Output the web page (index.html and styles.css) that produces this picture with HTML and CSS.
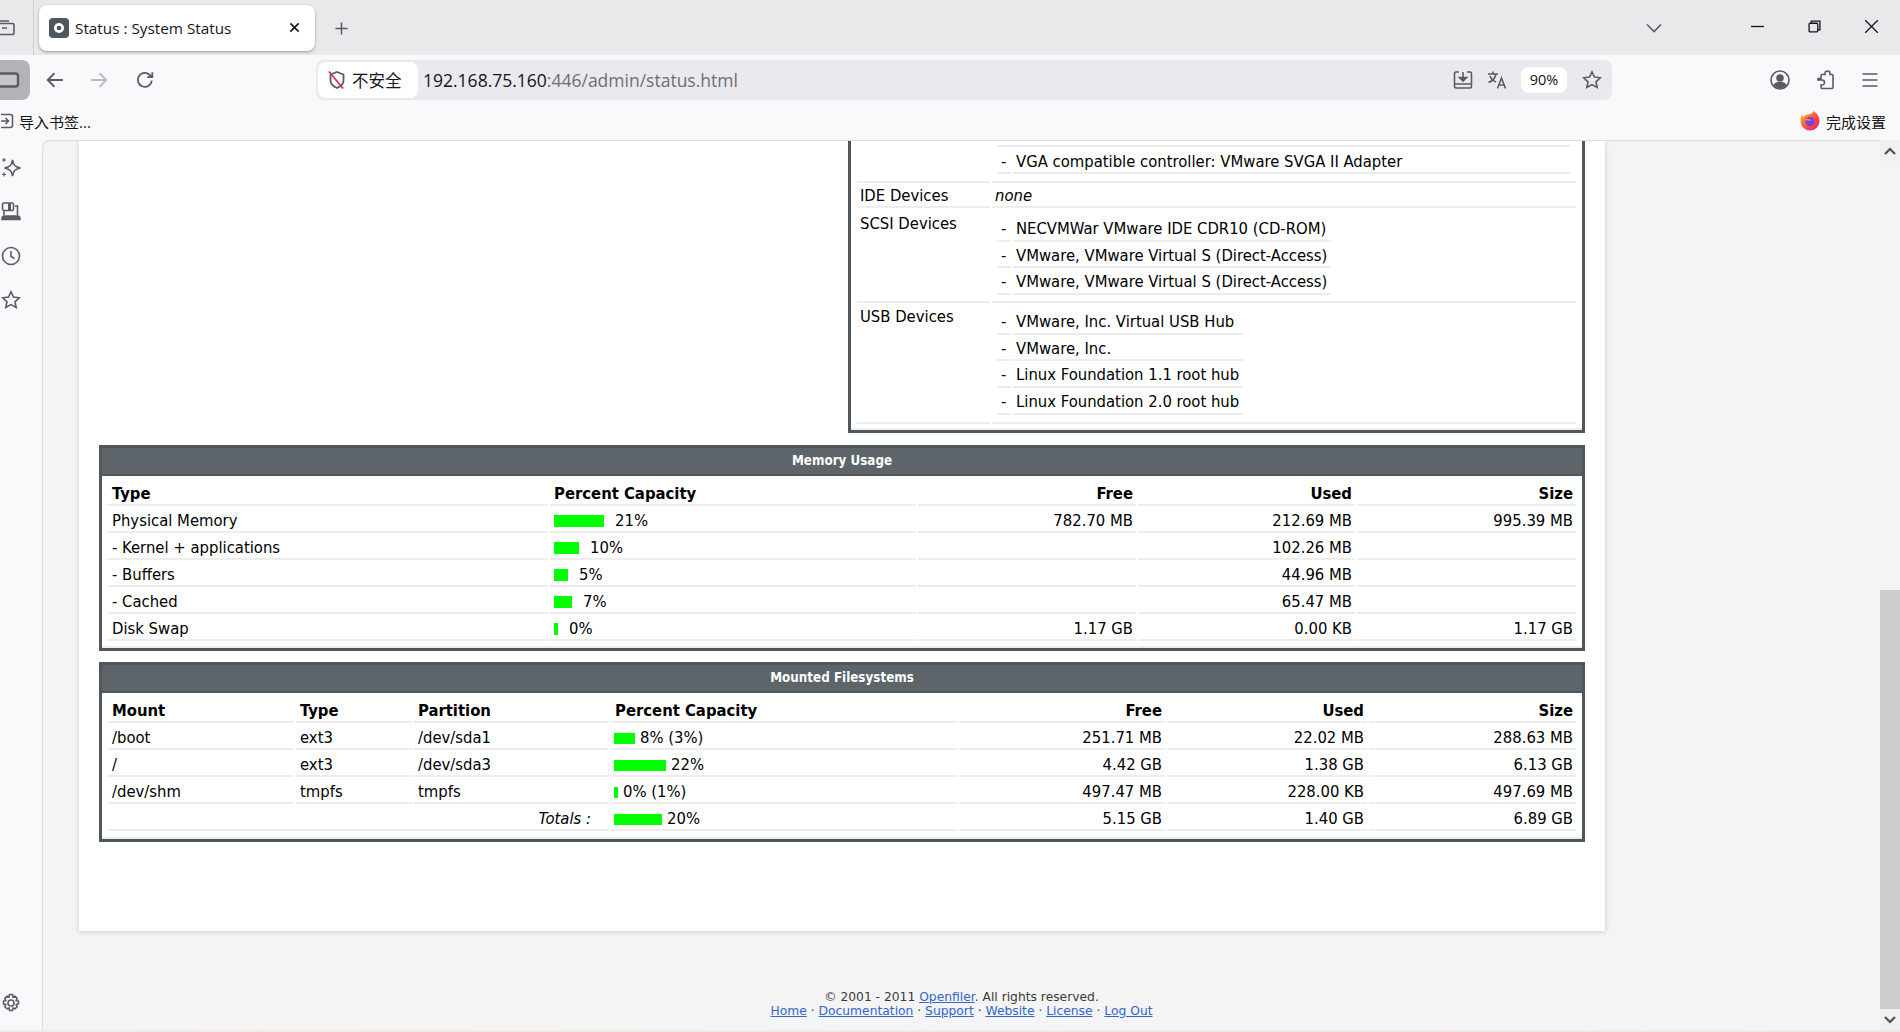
FILE: index.html
```html
<!DOCTYPE html>
<html lang="en">
<head>
<meta charset="utf-8">
<title>Status : System Status</title>
<link rel="stylesheet" href="styles.css">
</head>
<body>
<div class="window">
  <header class="tabstrip">
    <div class="tabs-left">
      <svg class="ic tabs-ic" viewBox="0 0 16 16"><path d="M-3 3.500h15.500a1.500 1.500 0 0 1 1.500 1.500v8a1.500 1.500 0 0 1-1.500 1.500H-3M-3 1h12M2 8h5"/></svg>
      <div class="divider"></div>
      <div class="tab">
        <svg class="favicon" viewBox="0 0 20 20"><rect width="20" height="20" rx="4" fill="#4f575c"/><circle cx="10" cy="10" r="5" fill="#fff"/><circle cx="10" cy="10" r="2.300" fill="#4f575c"/></svg>
        <span class="tab-title">Status : System Status</span>
        <svg class="ic tab-close" viewBox="0 0 12 12"><path d="M1.500 1.500l9 9M10.500 1.500l-9 9"/></svg>
      </div>
      <svg class="ic new-tab" viewBox="0 0 16 16"><path d="M8 1.500v13M1.500 8h13"/></svg>
    </div>
    <div class="win-ctrls">
      <svg class="ic tab-list" viewBox="0 0 16 10"><path d="M1 1.500l7 7 7-7"/></svg>
      <svg class="ic win-ic win-min" viewBox="0 0 12 12"><path d="M0 6h12"/></svg>
      <svg class="ic win-ic win-max" viewBox="0 0 12 12"><path d="M3 3V1h8v8H9"/><rect x="1" y="3" width="8" height="8" rx="1"/></svg>
      <svg class="ic win-ic win-close" viewBox="0 0 12 12"><path d="M0 0l12 12M12 0L0 12"/></svg>
    </div>
  </header>

  <nav class="toolbar">
    <div class="nav-left">
      <div class="sidebar-btn"><svg class="ic" viewBox="0 0 20 16"><rect x="-6" y="1.500" width="24" height="13" rx="2.500" fill="#c6c6ca"/></svg></div>
      <svg class="ic nav-ic" viewBox="0 0 16 16"><path d="M15 8H1.500M7.500 2l-6 6 6 6"/></svg>
      <svg class="ic nav-ic dim" viewBox="0 0 16 16"><path d="M1 8h13.500M8.500 2l6 6-6 6"/></svg>
      <svg class="ic nav-ic" viewBox="0 0 16 16"><path d="M14 8.500a6.200 6.200 0 1 1-2-5.200L14 5M14.500 1v4.500H10"/></svg>
    </div>
    <div class="urlbar">
      <div class="site-badge">
        <svg class="shield" viewBox="0 0 20 20"><path d="M10 2l6.500 2.500v6c0 3.500-3 6-6.500 7.500-3.500-1.500-6.500-4-6.500-7.500v-6z" fill="none" stroke="#5b5b66" stroke-width="1.800"/><path d="M2 1.500l14 17" stroke="#e22850" stroke-width="1.800"/></svg>
        <span>不安全</span>
      </div>
      <div class="url"><span class="url-host">192.168.75.160</span><span class="url-rest">:446/admin/status.html</span></div>
      <div class="url-actions">
        <svg class="ic act" viewBox="0 0 20 20"><path d="M6 2H3a1.500 1.500 0 0 0-1.500 1.500v13A1.500 1.500 0 0 0 3 18h14a1.500 1.500 0 0 0 1.500-1.500v-13A1.500 1.500 0 0 0 17 2h-3M1.500 14h17M10 2v8.500"/><path d="M6.500 7.500L10 11l3.500-3.500z" fill="#5b5b66"/></svg>
        <svg class="ic act act-tr" viewBox="0 0 20 20"><path d="M1 4h10M6 1.500V4M9 4c-.8 4-3.500 7-7.500 8.500M3 6c1 3 3.500 5 6 6M10.500 18.500L14.500 8l4 10.500M12 15h5"/></svg>
        <span class="zoom-pill">90%</span>
        <svg class="ic act" viewBox="0 0 20 20"><path d="M10 1.800l2.500 5.300 5.800.7-4.300 4 1.200 5.700-5.200-2.900-5.200 2.900L6 11.800l-4.300-4 5.800-.7z"/></svg>
      </div>
    </div>
    <div class="nav-right">
      <svg class="ic act" viewBox="0 0 20 20"><circle cx="10" cy="10" r="9"/><circle cx="10" cy="8" r="3" fill="#5b5b66"/><path d="M3.500 15c1-2.500 3.500-3 6.500-3s5.500.5 6.500 3c-1.500 2-4 3.500-6.500 3.500s-5-1.500-6.500-3.500z" fill="#5b5b66" stroke="none"/></svg>
      <svg class="ic act" viewBox="0 0 20 20"><path d="M2 9h3V6a1 1 0 0 1 1-1h3V4a2.500 2.500 0 0 1 5 0v1h2a1 1 0 0 1 1 1v12a1 1 0 0 1-1 1H6a1 1 0 0 1-1-1v-2.500h1a2.500 2.500 0 0 0 0-5H2z" transform="translate(0 -0.500)"/></svg>
      <svg class="ic act" viewBox="0 0 20 20"><path d="M2.500 4h15M2.500 10h15M2.500 16h15"/></svg>
    </div>
  </nav>

  <div class="bookmarks">
    <div class="bm-item">
      <svg class="ic bm-ic" viewBox="0 0 14 16"><path d="M1 1.500h9.500a2 2 0 0 1 2 2v9a2 2 0 0 1-2 2H1M1 8h7M5.500 5L8.500 8l-3 3"/></svg>
      <span>导入书签...</span>
    </div>
    <div class="bm-item">
      <svg class="fx" viewBox="0 0 20 20"><defs><linearGradient id="fxg" x1="0" y1="0" x2="1" y2="1"><stop offset="0" stop-color="#ffbd2e"/><stop offset=".55" stop-color="#ff4f3a"/><stop offset="1" stop-color="#e31587"/></linearGradient></defs><path d="M13.500 0c3.500 2.500 6 5.500 6 10a9.500 9.500 0 0 1-19 0c0-2.500.6-4.500 1.500-6 .2 1 .7 1.800 1.500 2.200C4.500 4.500 6 3.400 8 3.400c2.500 0 5-1 5.500-3.400z" fill="url(#fxg)"/><circle cx="10" cy="10.500" r="4.500" fill="#7542e5"/><path d="M5.500 8.500c2 0 3 .5 5 .5" stroke="#ff980e" stroke-width="1.500" fill="none"/></svg>
      <span>完成设置</span>
    </div>
  </div>

  <div class="viewport">
    <aside class="sidebar">
      <div class="side-top">
        <svg class="ic side-ic" viewBox="0 0 20 20"><path d="M11.500 2c.8 5 2.500 7 8 8-5.500 1-7.200 3-8 8-.8-5-2.500-7-8-8 5.500-1 7.200-3 8-8z"/><path d="M3 0v4M1 2h4M3 14.500v4M1 16.500h4" stroke-width="1.200"/></svg>
        <svg class="ic side-ic" viewBox="0 0 20 20"><rect x="1.500" y="1" width="11" height="7.500" rx="1.500"/><path d="M8.500 1v7.500" stroke-width="3"/><path d="M14 4h2.500v9M3 9v4"/><path d="M1 17.500c0-2 .5-3.500 2-3.500h14c1.500 0 2 1.500 2 3.500z" fill="#5b5b66"/></svg>
        <svg class="ic side-ic" viewBox="0 0 20 20"><circle cx="10" cy="10" r="8.500"/><path d="M10 5v5.500l3.500 2"/></svg>
        <svg class="ic side-ic" viewBox="0 0 20 20"><path d="M10 1.800l2.500 5.300 5.800.7-4.300 4 1.200 5.700-5.200-2.900-5.200 2.900L6 11.800l-4.300-4 5.800-.7z"/></svg>
      </div>
      <svg class="ic side-ic" viewBox="0 0 20 20"><circle cx="10" cy="10" r="3"/><path d="M8.500 1.500h3l.5 2.500 2-.9 2.200 2.200-1 2.100 2.300.6v3l-2.300.6 1 2.100-2.200 2.200-2-.9-.5 2.500h-3l-.5-2.500-2 .9-2.200-2.200 1-2.100-2.300-.6v-3l2.300-.6-1-2.100L6 3.100l2 .9z"/></svg>
    </aside>

    <main class="page">
      <section class="card">
        <div class="hw-wrap">
          <div class="panel panel-hw">
            <table class="grid hw">
              <colgroup><col class="h1"><col class="h2"></colgroup>
              <tr>
                <td class="hw-label"></td>
                <td class="hw-value">
                  <div class="top-rule"></div>
                  <div class="sub full"><span class="dash">-</span><span class="sub-text">VGA compatible controller: VMware SVGA II Adapter</span></div>
                </td>
              </tr>
              <tr>
                <td class="mid">IDE Devices</td>
                <td class="mid"><em>none</em></td>
              </tr>
              <tr>
                <td class="hw-label scsi-label">SCSI Devices</td>
                <td class="hw-value">
                  <div class="subs scsi">
                    <div class="sub"><span class="dash">-</span><span class="sub-text">NECVMWar VMware IDE CDR10 (CD-ROM)</span></div>
                    <div class="sub"><span class="dash">-</span><span class="sub-text">VMware, VMware Virtual S (Direct-Access)</span></div>
                    <div class="sub"><span class="dash">-</span><span class="sub-text">VMware, VMware Virtual S (Direct-Access)</span></div>
                  </div>
                </td>
              </tr>
              <tr>
                <td class="hw-label usb-label">USB Devices</td>
                <td class="hw-value">
                  <div class="subs usb">
                    <div class="sub"><span class="dash">-</span><span class="sub-text">VMware, Inc. Virtual USB Hub</span></div>
                    <div class="sub"><span class="dash">-</span><span class="sub-text">VMware, Inc.</span></div>
                    <div class="sub"><span class="dash">-</span><span class="sub-text">Linux Foundation 1.1 root hub</span></div>
                    <div class="sub"><span class="dash">-</span><span class="sub-text">Linux Foundation 2.0 root hub</span></div>
                  </div>
                </td>
              </tr>
            </table>
          </div>
        </div>

        <div class="panel panel-mem">
          <div class="panel-title">Memory Usage</div>
          <table class="grid mem">
            <colgroup><col class="m1"><col class="m2"><col class="m3"><col class="m4"><col class="m5"></colgroup>
            <tr><th>Type</th><th>Percent Capacity</th><th class="r">Free</th><th class="r">Used</th><th class="r">Size</th></tr>
            <tr><td>Physical Memory</td><td><span class="bar" style="width:50px"></span><span class="pct wide">21%</span></td><td class="r">782.70 MB</td><td class="r">212.69 MB</td><td class="r">995.39 MB</td></tr>
            <tr><td>- Kernel + applications</td><td><span class="bar" style="width:25px"></span><span class="pct wide">10%</span></td><td class="r"></td><td class="r">102.26 MB</td><td class="r"></td></tr>
            <tr><td>- Buffers</td><td><span class="bar" style="width:14px"></span><span class="pct wide">5%</span></td><td class="r"></td><td class="r">44.96 MB</td><td class="r"></td></tr>
            <tr><td>- Cached</td><td><span class="bar" style="width:18px"></span><span class="pct wide">7%</span></td><td class="r"></td><td class="r">65.47 MB</td><td class="r"></td></tr>
            <tr><td>Disk Swap</td><td><span class="bar" style="width:4px"></span><span class="pct wide">0%</span></td><td class="r">1.17 GB</td><td class="r">0.00 KB</td><td class="r">1.17 GB</td></tr>
          </table>
        </div>

        <div class="panel panel-fs">
          <div class="panel-title">Mounted Filesystems</div>
          <table class="grid fs">
            <colgroup><col class="f1"><col class="f2"><col class="f3"><col class="f4"><col class="f5"><col class="f6"><col class="f7"></colgroup>
            <tr><th>Mount</th><th>Type</th><th>Partition</th><th>Percent Capacity</th><th class="r">Free</th><th class="r">Used</th><th class="r">Size</th></tr>
            <tr><td>/boot</td><td>ext3</td><td>/dev/sda1</td><td><span class="bar" style="width:21px"></span><span class="pct">8% (3%)</span></td><td class="r">251.71 MB</td><td class="r">22.02 MB</td><td class="r">288.63 MB</td></tr>
            <tr><td>/</td><td>ext3</td><td>/dev/sda3</td><td><span class="bar" style="width:52px"></span><span class="pct">22%</span></td><td class="r">4.42 GB</td><td class="r">1.38 GB</td><td class="r">6.13 GB</td></tr>
            <tr><td>/dev/shm</td><td>tmpfs</td><td>tmpfs</td><td><span class="bar" style="width:4px"></span><span class="pct">0% (1%)</span></td><td class="r">497.47 MB</td><td class="r">228.00 KB</td><td class="r">497.69 MB</td></tr>
            <tr><td colspan="3" class="r totals"><em>Totals :</em></td><td><span class="bar" style="width:48px"></span><span class="pct">20%</span></td><td class="r">5.15 GB</td><td class="r">1.40 GB</td><td class="r">6.89 GB</td></tr>
          </table>
        </div>
      </section>

      <footer class="foot">
        <div>© 2001 - 2011 <a href="#">Openfiler</a>. All rights reserved.</div>
        <div><a href="#">Home</a> · <a href="#">Documentation</a> · <a href="#">Support</a> · <a href="#">Website</a> · <a href="#">License</a> · <a href="#">Log Out</a></div>
      </footer>
    </main>

    <div class="scrollbar">
      <div class="sb-btn"><svg viewBox="0 0 12 8"><path d="M1 7l5-5 5 5" fill="none" stroke="#505050" stroke-width="2.200"/></svg></div>
      <div class="sb-track"><div class="sb-thumb"></div></div>
      <div class="sb-btn"><svg viewBox="0 0 12 8"><path d="M1 1l5 5 5-5" fill="none" stroke="#505050" stroke-width="2.200"/></svg></div>
    </div>
  </div>
  <div class="bottom-strip"></div>
</div>
</body>
</html>
```
FILE: styles.css
```css
* { box-sizing: border-box; }
html, body { margin: 0; height: 100%; overflow: hidden; }
body { font-family: "Open Sans", "Noto Sans CJK SC", sans-serif; color: #15141a; background: #f9f9fb; }
.window { width: 1900px; height: 1032px; display: flex; flex-direction: column; overflow: hidden; }
.ic { fill: none; stroke: #5b5b66; stroke-width: 1.6; flex: none; overflow: hidden; }

.tabstrip { height: 55px; background: #e9e9ec; display: flex; justify-content: space-between; align-items: flex-start; }
.tabs-left { display: flex; align-items: flex-start; }
.tabs-ic { width: 16px; height: 16px; margin-top: 20px; }
.divider { width: 1px; height: 55px; background: #cfcfd4; margin-left: 17px; }
.tab { width: 276px; height: 46px; margin: 5px 0 0 5px; background: #fff; border-radius: 8px; box-shadow: 0 1px 3px rgba(0,0,0,.35); display: flex; align-items: center; padding: 0 15px 1px 10px; font-size: 15.300px; }
.favicon { width: 20px; height: 20px; flex: none; }
.tab-title { margin-left: 6px; flex: 1; }
.tab-close { width: 11px; height: 11px; stroke: #15141a; stroke-width: 1.700; }
.new-tab { width: 15px; height: 15px; margin: 21px 0 0 19px; }
.win-ctrls { display: flex; align-items: center; height: 53px; }
.tab-list { width: 16px; height: 10px; margin-right: 89px; margin-top: 2px; }
.win-ic { width: 13px; height: 13px; stroke: #15141a; stroke-width: 1.200; margin-right: 44px; }
.win-close { margin-right: 22px; }

.toolbar { height: 47px; display: flex; align-items: center; padding-top: 3px; padding-bottom: 1px; }
.nav-left { display: flex; align-items: center; width: 316px; flex: none; }
.sidebar-btn { width: 30px; height: 40px; background: #b4b4b8; border-radius: 0 8px 8px 0; display: flex; align-items: center; flex: none; }
.sidebar-btn .ic { width: 20px; height: 16px; stroke-width: 2.400; }
.nav-ic { width: 18px; height: 18px; margin-left: 16px; }
.nav-ic.dim { opacity: .4; margin-left: 26px; }
.nav-ic:last-child { margin-left: 28px; }
.urlbar { width: 1296px; height: 40px; background: #eaeaee; border-radius: 8px; display: flex; align-items: center; padding-left: 2px; flex: none; }
.site-badge { width: 100px; height: 36px; background: #fff; border-radius: 8px; display: flex; align-items: center; padding-left: 9px; gap: 5px; font-size: 16.500px; flex: none; }
.shield { width: 20px; height: 20px; flex: none; }
.url { margin-left: 5px; font-size: 17.500px; flex: 1; white-space: nowrap; }
.url-rest { color: #6e6e76; }
.url-actions { display: flex; align-items: center; padding-right: 10px; }
.act { width: 20px; height: 20px; }
.act-tr { margin-left: 14px; }
.zoom-pill { margin: 0 15px 0 14px; width: 46px; height: 26px; background: #fff; border-radius: 8px; font-size: 14.500px; display: flex; align-items: center; justify-content: center; }
.nav-right { display: flex; align-items: center; gap: 26px; margin-left: 158px; }
.nav-right .act:last-child { margin-left: -2px; }

.bookmarks { height: 38px; display: flex; justify-content: space-between; align-items: center; font-size: 15px; padding: 0 14px 0 0; }
.bm-item { display: flex; align-items: center; gap: 5px; }
.bm-ic { width: 14px; height: 16px; }
.fx { width: 20px; height: 20px; margin-right: 1px; }

.viewport { flex: 1; display: flex; min-height: 0; }
.sidebar { width: 42px; flex: none; display: flex; flex-direction: column; justify-content: space-between; padding: 18px 0 17px 1px; }
.side-top { display: flex; flex-direction: column; gap: 24px; }
.side-ic { width: 20px; height: 20px; display: block; }

.page { flex: 1; min-width: 0; background: #f4f4f4; border-top-left-radius: 8px; border-left: 1px solid #dcdcdc; border-top: 1px solid #dcdcdc; display: flex; flex-direction: column; overflow: hidden; }
.card { width: 1526px; height: 790px; margin-left: 36px; background: #fff; box-shadow: 0 1px 5px rgba(0,0,0,.18); padding: 0 20px; flex: none; font-family: "DejaVu Sans Condensed", "DejaVu Sans", sans-serif; font-size: 16.500px; color: #000; }
.hw-wrap { display: flex; justify-content: flex-end; }
.panel { border: 3px solid #4f575c; background: #fff; box-shadow: inset 0 -2px 0 #ededed; }
.panel-hw { width: 737px; height: 292px; border-top: 0; }
.panel-mem { margin-top: 12px; height: 206px; }
.panel-fs { margin-top: 11px; height: 180px; }
.panel-title { height: 28px; background: #5d646a; border-bottom: 2px solid #4f575c; color: #fff; text-align: center; font-size: 13.300px; font-weight: 700; line-height: 26px; }

.grid { border-collapse: separate; border-spacing: 2px; table-layout: fixed; width: 1472px; margin: 3px 4px 0; }
.grid td, .grid th { padding: 1px 3px 0 4px; height: 25px; border-bottom: 2px solid #ededed; text-align: left; white-space: nowrap; line-height: 21px; font-weight: 400; }
.grid th { font-weight: 700; padding-top: 2px; }
.grid .r { text-align: right; }

.m1 { width: 440px; } .m2 { width: 366px; } .m3 { width: 218px; } .m4 { width: 217px; } .m5 { width: 219px; }
.f1 { width: 186px; } .f2 { width: 116px; } .f3 { width: 195px; } .f4 { width: 346px; } .f5 { width: 206px; } .f6 { width: 200px; } .f7 { width: 207px; }

.bar { display: inline-block; height: 12px; background: #0f0; vertical-align: -1px; }
.fs .bar { height: 11px; margin-left: -1px; }
.pct { margin-left: 5px; }
.pct.wide { margin-left: 11px; }
.grid .totals { padding-right: 18px; }

.grid.hw { width: 723px; margin: 0 4px; }
.h1 { width: 133px; } .h2 { width: 584px; }
.grid .hw-label { vertical-align: top; padding: 0 3px; height: auto; }
.grid .scsi-label { padding-top: 3px; }
.grid .usb-label { padding-top: 1px; }
.grid .hw-value { vertical-align: top; padding: 0; height: auto; }
.top-rule { height: 2px; background: #ededed; margin: 2px 6px 0 5px; }
.grid .mid { height: 23px; padding: 1px 3px 0; line-height: 20px; }
.subs { width: fit-content; display: flex; flex-direction: column; margin-left: 5px; }
.scsi { margin-top: 5px; margin-bottom: 6px; }
.usb { margin-top: 3px; margin-bottom: 7px; }
.sub { display: flex; height: 26.700px; padding-top: 2px; }
.full { height: 27px; padding-top: 3px; margin: 0 6px 7px 5px; }
.dash { width: 14px; padding-left: 4px; border-bottom: 2px solid #ededed; margin-right: 2px; line-height: 23px; flex: none; }
.sub-text { flex: 1; padding: 0 4px 0 3px; border-bottom: 2px solid #ededed; line-height: 23px; }

.foot { margin-top: 59px; text-align: center; font-family: "DejaVu Sans", sans-serif; font-size: 12.300px; line-height: 14px; color: #3a3a3a; }
.foot a { color: #3366cc; }

.scrollbar { width: 20px; flex: none; display: flex; flex-direction: column; background: #f4f4f4; }
.sb-btn { height: 21px; display: flex; align-items: center; justify-content: center; background: #f0f0f0; }
.sb-btn svg { width: 12px; height: 8px; }
.sb-track { flex: 1; display: flex; flex-direction: column; justify-content: flex-end; }
.sb-thumb { height: 419px; background: #cdcdcd; }

.bottom-strip { height: 2px; flex: none; background: linear-gradient(90deg, #ededed, #f5e8e0 60%, #f3e9e4); }
```
